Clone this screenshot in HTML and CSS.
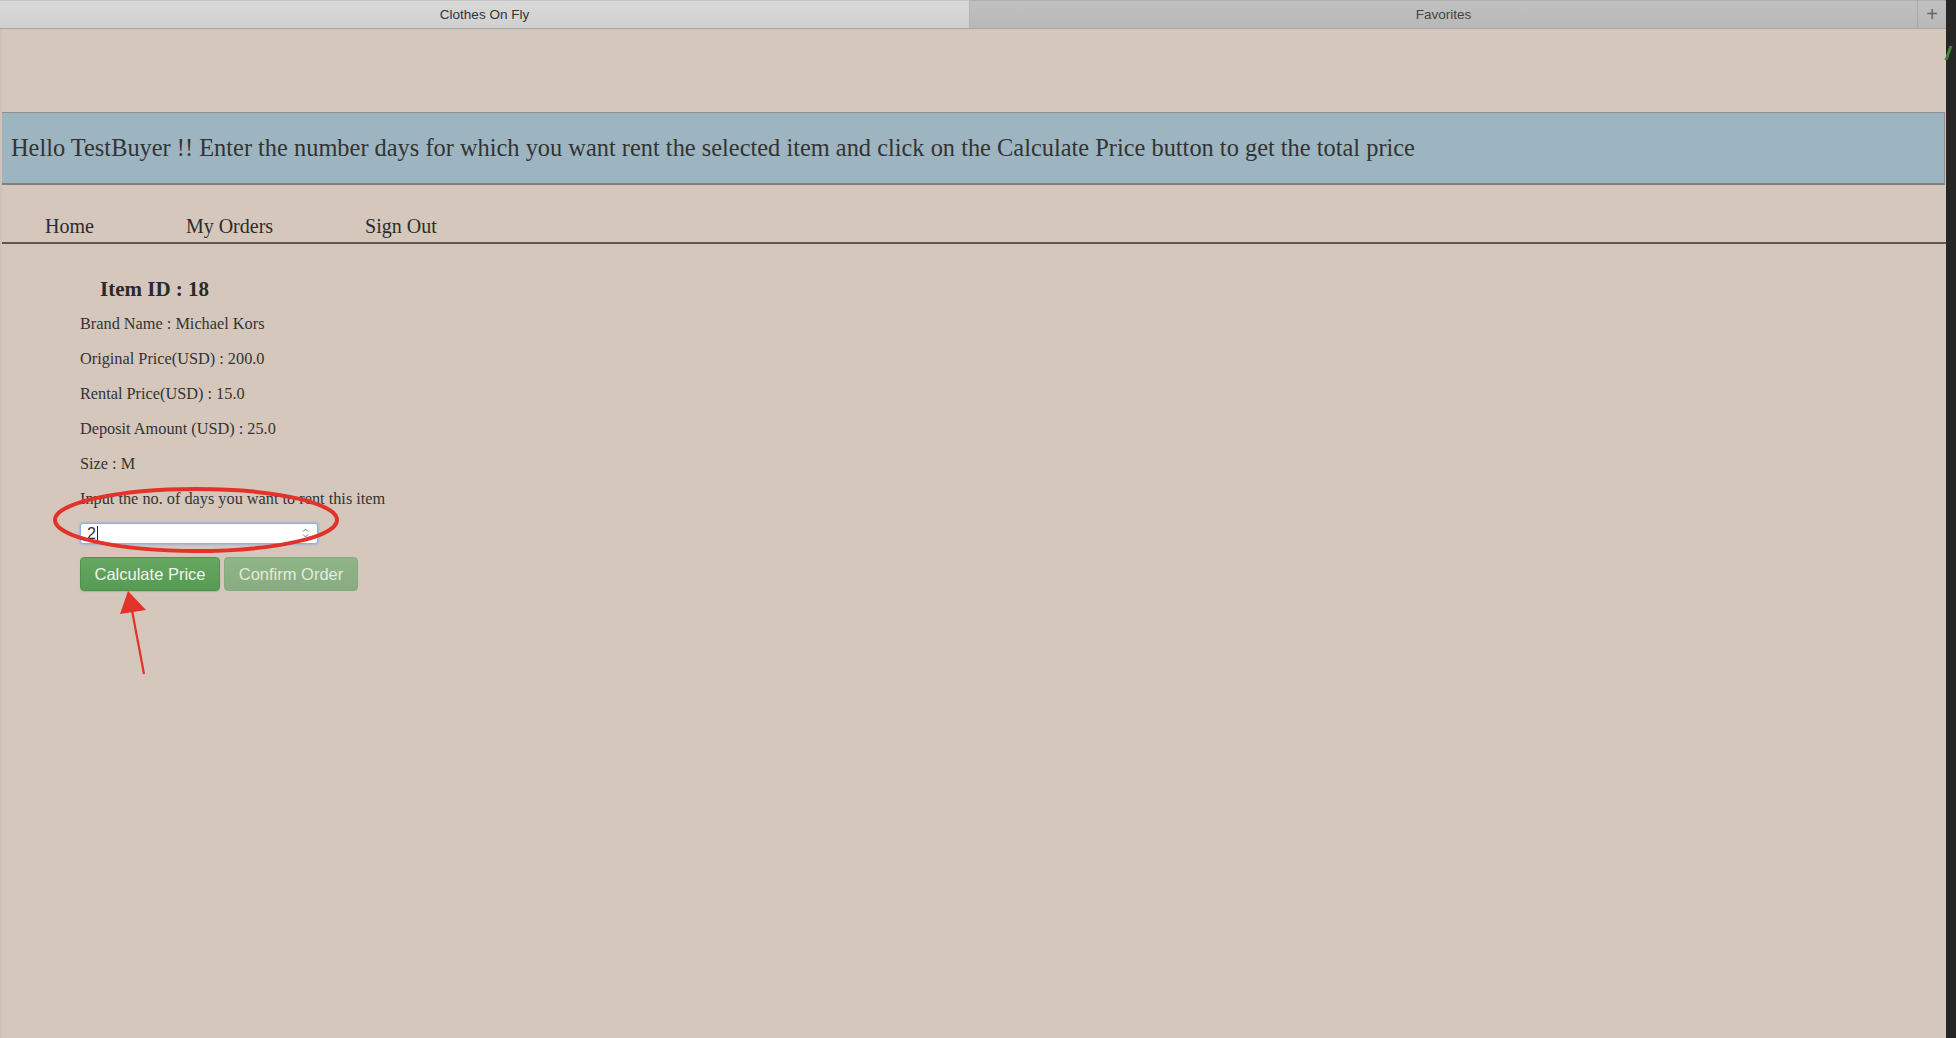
FILE: index.html
```html
<!DOCTYPE html>
<html>
<head>
<meta charset="utf-8">
<title>Clothes On Fly</title>
<link rel="stylesheet" href="styles.css">
</head>
<body>
<div class="window">
  <div class="main">
    <div class="tabbar">
      <div class="tab tab-active">Clothes On Fly</div>
      <div class="tab tab-inactive">Favorites</div>
      <div class="tab-plus">+</div>
    </div>
    <div class="page">
      <div class="banner">Hello TestBuyer !! Enter the number days for which you want rent the selected item and click on the Calculate Price button to get the total price</div>
      <nav class="nav">
        <a class="nav-link">Home</a>
        <a class="nav-link">My Orders</a>
        <a class="nav-link">Sign Out</a>
      </nav>
      <div class="content">
        <h3 class="item-title">Item ID : 18</h3>
        <p class="detail">Brand Name : Michael Kors</p>
        <p class="detail">Original Price(USD) : 200.0</p>
        <p class="detail">Rental Price(USD) : 15.0</p>
        <p class="detail">Deposit Amount (USD) : 25.0</p>
        <p class="detail">Size : M</p>
        <p class="detail label">Input the no. of days you want to rent this item</p>
        <div class="input-wrap">
          <input class="days-input" type="text" value="2">
          <span class="caret"></span>
          <svg class="spinner" width="7" height="12" viewBox="0 0 7 12"><path d="M1 4.5 L3.5 2 L6 4.5 M1 7.5 L3.5 10 L6 7.5" fill="none" stroke="#777" stroke-width="1"/></svg>
        </div>
        <div class="buttons">
          <button class="btn btn-calc">Calculate Price</button>
          <button class="btn btn-confirm">Confirm Order</button>
        </div>
      </div>
      <svg class="annotation" width="400" height="700" viewBox="0 0 400 700">
        <ellipse cx="196" cy="520" rx="141" ry="31" fill="none" stroke="#e3322a" stroke-width="4"/>
        <line x1="144" y1="674" x2="131" y2="605" stroke="#e3322a" stroke-width="2.2"/>
        <polygon points="128,591 120,614 146,610" fill="#e3322a"/>
      </svg>
    </div>
  </div>
  <div class="edge">
    <span class="edge-mark"></span>
  </div>
</div>
</body>
</html>
```
FILE: styles.css
```css
html, body {
  margin: 0;
  padding: 0;
}
body {
  background: #262626;
  width: 1956px;
  height: 1038px;
  overflow: hidden;
}
.window {
  display: flex;
  width: 1956px;
  height: 1038px;
}
.main {
  width: 1946px;
  display: flex;
  flex-direction: column;
}
.tabbar {
  height: 28px;
  display: flex;
  border-bottom: 1px solid #a7a7a7;
  font-family: "Liberation Sans", Arial, sans-serif;
  font-size: 13.5px;
  color: #333;
}
.tab {
  display: flex;
  align-items: center;
  justify-content: center;
}
.tab-active {
  width: 970px;
  background: linear-gradient(#d9d9d9, #d0d0d0);
  border-right: 1px solid #b3b3b3;
  box-sizing: border-box;
  border-top: 1px solid #c4c4c4;
}
.tab-inactive {
  flex: 1;
  background: linear-gradient(#c0c0c0, #b8b8b8);
  border-top: 1px solid #b0b0b0;
  color: #444;
}
.tab-plus {
  width: 28px;
  background: linear-gradient(#c0c0c0, #b8b8b8);
  border-left: 1px solid #aaaaaa;
  border-top: 1px solid #b0b0b0;
  display: flex;
  align-items: center;
  justify-content: center;
  font-size: 20px;
  font-weight: 300;
  color: #666;
}
.page {
  flex: 1;
  position: relative;
  background: #d5c7bc;
  padding-top: 83px;
  border-left: 2px solid #cfc3b9;
}
.banner {
  height: 70px;
  margin-right: 1px;
  background: #9db5c0;
  border-top: 1px solid #8f8f8f;
  border-bottom: 2px solid #7f8080;
  border-right: 1px solid #8a8f92;
  display: flex;
  align-items: center;
  padding-left: 9px;
  font-family: "Liberation Serif", "Times New Roman", serif;
  font-size: 24.4px;
  color: #333;
}
.nav {
  display: flex;
  gap: 92px;
  padding: 30px 0 4px 43px;
  border-bottom: 2px solid #5d5853;
  font-family: "Liberation Serif", "Times New Roman", serif;
  font-size: 20px;
  line-height: 23px;
  color: #2c2c2c;
}
.nav-link {
  color: #2c2c2c;
}
.content {
  padding-left: 78px;
  font-family: "Liberation Serif", "Times New Roman", serif;
  color: #333;
}
.item-title {
  margin: 33px 0 13px 20px;
  font-size: 21px;
  line-height: 24px;
  font-weight: bold;
  color: #2a2a2a;
}
.detail {
  margin: 0 0 16px 0;
  font-size: 16.3px;
  line-height: 19px;
}
.label {
  margin-bottom: 15px;
}
.input-wrap {
  position: relative;
  width: 238px;
  height: 21px;
}
.days-input {
  box-sizing: border-box;
  width: 238px;
  height: 21px;
  margin: 0;
  padding: 0 0 0 6px;
  border: 1px solid #86b3ea;
  border-radius: 3px;
  box-shadow: 0 0 2px 1px rgba(120, 170, 235, 0.55);
  background: #fff;
  font-family: "Liberation Sans", Arial, sans-serif;
  font-size: 16px;
  color: #333;
  outline: none;
}
.caret {
  position: absolute;
  left: 17px;
  top: 3px;
  width: 1px;
  height: 15px;
  background: #222;
}
.spinner {
  position: absolute;
  right: 9px;
  top: 4px;
}
.buttons {
  display: flex;
  gap: 4px;
  margin-top: 13px;
}
.btn {
  height: 34px;
  border-radius: 4px;
  font-family: "Liberation Sans", Arial, sans-serif;
  font-size: 16.5px;
  padding: 0;
  cursor: pointer;
}
.btn-calc {
  width: 140px;
  background: linear-gradient(#66a862, #579a54);
  border: 1px solid #508f4c;
  color: #f1f6ef;
  box-shadow: 0 1px 1px rgba(0, 0, 0, 0.12);
}
.btn-confirm {
  width: 134px;
  background: linear-gradient(#8fb486, #88ad80);
  border: 1px solid #86a97e;
  color: #e2ebde;
}
.annotation {
  position: absolute;
  left: -2px;
  top: 0;
  overflow: visible;
  transform: translateY(-29px);
  pointer-events: none;
}
.edge {
  flex: 1;
  position: relative;
  background: #262626;
}
.edge-mark {
  position: absolute;
  left: 1px;
  top: 46px;
  width: 3px;
  height: 14px;
  background: #3d8a3a;
  transform: skewX(-20deg);
}
```
